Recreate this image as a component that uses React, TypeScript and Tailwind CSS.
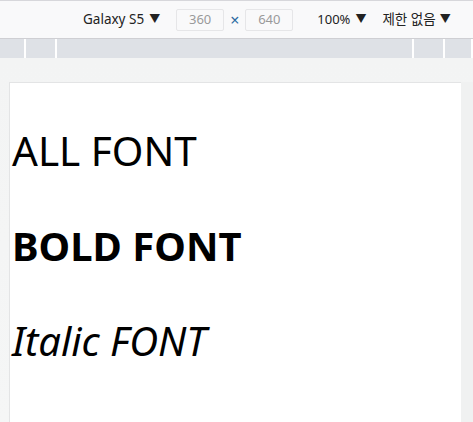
export default function App() {
  return (
    <div className="w-[473px] h-[422px] overflow-hidden bg-[#f5f6f6] flex flex-col" style={{ fontFamily: "'Noto Sans', sans-serif" }}>
      <div className="h-[39px] shrink-0 bg-[#f9f9fa] border-t border-[#d7d7db] border-b border-b-[#cfcfd3] flex items-center text-[13px] text-[#222]" style={{ fontFamily: "'Noto Sans', 'Noto Sans CJK KR', sans-serif" }}>
        <span className="ml-[83px] flex items-center gap-[5px] text-[13.5px]">
          Galaxy S5 <span className="text-[11px]">▼</span>
        </span>
        <div className="ml-[16px] w-[48px] h-[22px] border border-[#e6e6e8] rounded-[2px] flex items-center justify-center text-[#9a9a9a]">360</div>
        <span className="mx-[6px] text-[#2d6ca2] text-[16px] leading-none">×</span>
        <div className="w-[48px] h-[22px] border border-[#e6e6e8] rounded-[2px] flex items-center justify-center text-[#9a9a9a]">640</div>
        <span className="ml-[24px] flex items-center gap-[5px]">
          100% <span className="text-[11px]">▼</span>
        </span>
        <span className="ml-[16px] flex items-center gap-[4px] text-[13.5px]">
          제한 없음 <span className="text-[11px]">▼</span>
        </span>
      </div>
      <div className="h-[19px] shrink-0 bg-[#dee1e6] flex">
        <div className="w-[24px]" />
        <div className="w-[2px] bg-white" />
        <div className="w-[29px]" />
        <div className="w-[2px] bg-white" />
        <div className="flex-1" />
        <div className="w-[2px] bg-white" />
        <div className="w-[29px]" />
        <div className="w-[2px] bg-white" />
        <div className="w-[26px]" />
        <div className="w-[2px] bg-white" />
      </div>
      <div className="flex-1 flex pt-[24px] pl-[9px] bg-gradient-to-b from-[#f3f4f4] to-[#f5f6f6]">
        <div className="w-[452px] bg-white border-l border-t border-[#e3e4e5] text-black pl-[2px] flex flex-col">
          <p className="mt-[42px] text-[40.5px] leading-[52px]">ALL FONT</p>
          <p className="mt-[43px] text-[40px] leading-[52px] font-bold">BOLD FONT</p>
          <p className="mt-[43px] text-[40px] leading-[52px] italic">Italic FONT</p>
        </div>
        <div className="flex-1 bg-[#f0f1f1]" />
      </div>
    </div>
  );
}
